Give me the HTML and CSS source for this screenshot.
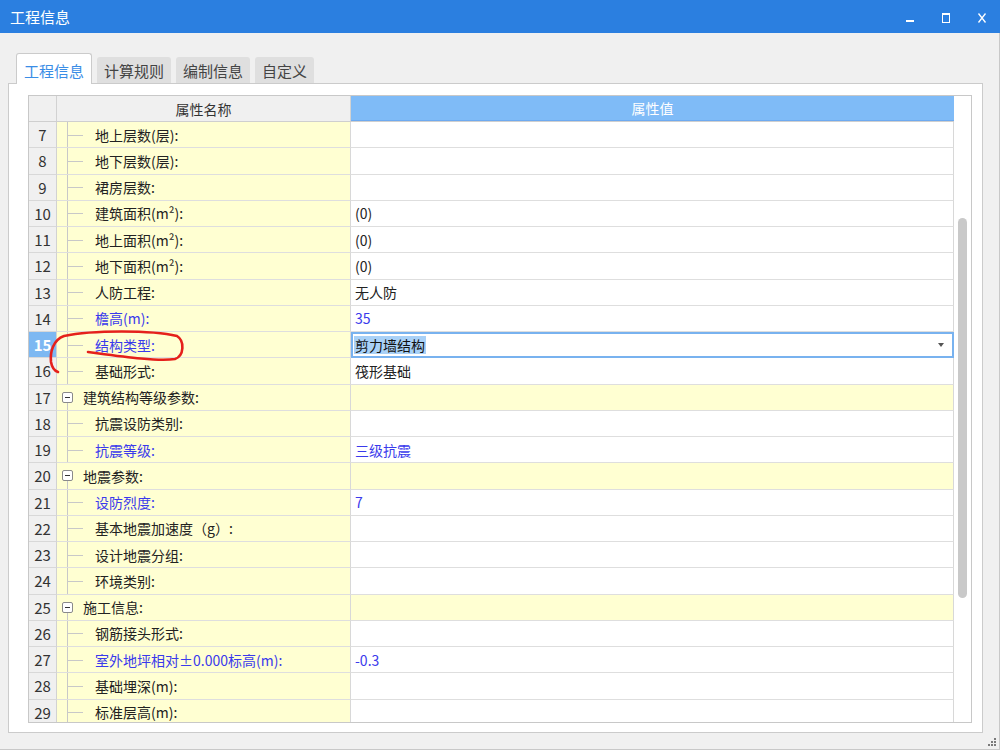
FILE: index.html
```html
<!DOCTYPE html>
<html lang="zh-CN">
<head>
<meta charset="utf-8">
<title>工程信息</title>
<link rel="stylesheet" href="styles.css">
</head>
<body>
<div class="titlebar">
  <div class="title">工程信息</div>
  <div class="controls">
    <div class="ctl"><svg width="10" height="10" viewBox="0 0 10 10"><rect x="1" y="7" width="8" height="2" fill="#fff"/></svg></div>
    <div class="ctl"><svg width="10" height="10" viewBox="0 0 10 10"><rect x="1.5" y="0.5" width="7" height="9" fill="none" stroke="#fff" stroke-width="1"/><rect x="1" y="0" width="8" height="2" fill="#fff"/></svg></div>
    <div class="ctl"><svg width="10" height="10" viewBox="0 0 10 10"><path d="M1.5 0.5 L8.5 9.5 M8.5 0.5 L1.5 9.5" stroke="#fff" stroke-width="1.3" fill="none"/></svg></div>
  </div>
</div>
<div class="window">
  <div class="tabs">
    <div class="tab active">工程信息</div>
    <div class="tab">计算规则</div>
    <div class="tab">编制信息</div>
    <div class="tab">自定义</div>
  </div>
  <div class="panel">
    <div class="grid">
      <div class="gmain">
        <div class="hrow">
          <div class="hnum"></div>
          <div class="hname">属性名称</div>
          <div class="hval">属性值</div>
        </div>
        <div class="row"><div class="num">7</div><div class="name">地上层数(层):</div><div class="val"></div></div>
        <div class="row"><div class="num">8</div><div class="name">地下层数(层):</div><div class="val"></div></div>
        <div class="row"><div class="num">9</div><div class="name">裙房层数:</div><div class="val"></div></div>
        <div class="row"><div class="num">10</div><div class="name">建筑面积(m²):</div><div class="val">(0)</div></div>
        <div class="row"><div class="num">11</div><div class="name">地上面积(m²):</div><div class="val">(0)</div></div>
        <div class="row"><div class="num">12</div><div class="name">地下面积(m²):</div><div class="val">(0)</div></div>
        <div class="row"><div class="num">13</div><div class="name">人防工程:</div><div class="val">无人防</div></div>
        <div class="row blue"><div class="num">14</div><div class="name">檐高(m):</div><div class="val">35</div></div>
        <div class="row blue"><div class="num sel">15</div><div class="name">结构类型:</div><div class="val combo"><div class="combo-box"><span class="seltext">剪力墙结构</span><span class="arrow"></span></div></div></div>
        <div class="row"><div class="num">16</div><div class="name">基础形式:</div><div class="val">筏形基础</div></div>
        <div class="row"><div class="num">17</div><div class="name group"><span class="minus"></span>建筑结构等级参数:</div><div class="val grp"></div></div>
        <div class="row"><div class="num">18</div><div class="name">抗震设防类别:</div><div class="val"></div></div>
        <div class="row blue"><div class="num">19</div><div class="name">抗震等级:</div><div class="val">三级抗震</div></div>
        <div class="row"><div class="num">20</div><div class="name group"><span class="minus"></span>地震参数:</div><div class="val grp"></div></div>
        <div class="row blue"><div class="num">21</div><div class="name">设防烈度:</div><div class="val">7</div></div>
        <div class="row"><div class="num">22</div><div class="name">基本地震加速度（g）:</div><div class="val"></div></div>
        <div class="row"><div class="num">23</div><div class="name">设计地震分组:</div><div class="val"></div></div>
        <div class="row"><div class="num">24</div><div class="name">环境类别:</div><div class="val"></div></div>
        <div class="row"><div class="num">25</div><div class="name group"><span class="minus"></span>施工信息:</div><div class="val grp"></div></div>
        <div class="row"><div class="num">26</div><div class="name">钢筋接头形式:</div><div class="val"></div></div>
        <div class="row blue"><div class="num">27</div><div class="name">室外地坪相对±0.000标高(m):</div><div class="val">-0.3</div></div>
        <div class="row"><div class="num">28</div><div class="name">基础埋深(m):</div><div class="val"></div></div>
        <div class="row"><div class="num">29</div><div class="name">标准层高(m):</div><div class="val"></div></div>
      </div>
      <div class="vscroll"><div class="thumb"></div></div>
    </div>
  </div>
  <div class="footer">
    <svg width="9" height="9" viewBox="0 0 9 9"><g fill="#7a7a7a"><rect x="7" y="1" width="2" height="2"/><rect x="4" y="4" width="2" height="2"/><rect x="7" y="4" width="2" height="2"/><rect x="1" y="7" width="2" height="2"/><rect x="4" y="7" width="2" height="2"/><rect x="7" y="7" width="2" height="2"/></g></svg>
  </div>
</div>
<svg class="ink" width="1000" height="750" viewBox="0 0 1000 750">
  <path d="M88 352 C 118 356, 158 362, 175 359 C 184 356, 185 341, 177 336 C 152 330, 92 330, 64 336 C 53 340, 50 352, 51 362 C 52 368, 55 371, 58 372" fill="none" stroke="#e5201b" stroke-width="2.6" stroke-linecap="round"/>
</svg>
</body>
</html>
```

FILE: styles.css
```css
* { box-sizing: border-box; }

body {
  margin: 0;
  width: 1000px;
  height: 750px;
  overflow: hidden;
  background: #f0f0f0;
  font-family: "Noto Sans CJK SC", "Noto Sans", sans-serif;
  font-size: 14px;
  color: #222;
  display: flex;
  flex-direction: column;
  position: relative;
}

.titlebar {
  height: 33px;
  flex: none;
  background: #2b7fe0;
  color: #fff;
  display: flex;
  align-items: center;
  padding-left: 10px;
  font-size: 15px;
}
.title { flex: 1; }
.controls { display: flex; height: 100%; }
.ctl {
  width: 36px;
  height: 100%;
  display: flex;
  align-items: center;
  justify-content: center;
  padding-top: 2px;
}

.window {
  flex: 1;
  display: flex;
  flex-direction: column;
  padding: 20px 16px 0 8px;
  border-right: 1px solid #c8c8c8;
  border-bottom: 1px solid #c8c8c8;
}

.tabs {
  height: 30px;
  display: flex;
  align-items: flex-end;
  gap: 5px;
  padding-left: 8px;
  position: relative;
  z-index: 1;
}
.tab {
  height: 26px;
  padding: 0 7px;
  background: #dfdfdf;
  color: #444;
  font-size: 15px;
  display: flex;
  align-items: center;
  border-radius: 3px 3px 0 0;
}
.tab.active {
  height: 31px;
  margin-bottom: -1px;
  padding: 2px 7px 0;
  background: #fff;
  color: #3a8de6;
  border: 1px solid #cbcbcb;
  border-bottom: none;
}

.panel {
  height: 650px;
  flex: none;
  background: #fff;
  border: 1px solid #cbcbcb;
  padding: 11px 10px 10px 19px;
}

.grid {
  width: 944px;
  height: 628px;
  border: 1px solid #c8c8c8;
  display: flex;
}

.gmain {
  width: 925px;
  display: flex;
  flex-direction: column;
  overflow: hidden;
}

.hrow {
  height: 26px;
  flex: none;
  display: flex;
  border-bottom: 1px solid #cfcfcf;
}
.hnum {
  width: 28px;
  background: #f0f0f0;
  border-right: 1px solid #d2d2d2;
}
.hname {
  width: 294px;
  background: #f0f0f0;
  border-right: 1px solid #d2d2d2;
  display: flex;
  align-items: center;
  justify-content: center;
  color: #333;
}
.hval {
  width: 603px;
  background: #7fbbf7;
  color: #fff;
  display: flex;
  align-items: center;
  justify-content: center;
  border-bottom: 1px solid #6eaaf0;
}

.row {
  height: 26.25px;
  flex: none;
  display: flex;
}
.num {
  width: 28px;
  background: #f0f0f0;
  border-right: 1px solid #d2d2d2;
  border-bottom: 1px solid #d8d8d8;
  display: flex;
  align-items: center;
  justify-content: center;
  color: #333;
  font-size: 15px;
}
.num.sel {
  background: #7db8f2;
  color: #fff;
  font-weight: bold;
}
.name {
  width: 294px;
  background: #ffffd2;
  border-right: 1px solid #d8d8d8;
  border-bottom: 1px solid #dedede;
  display: flex;
  align-items: center;
  padding-left: 38px;
  position: relative;
  white-space: nowrap;
}
.name::before {
  content: "";
  position: absolute;
  left: 10px;
  top: 0;
  bottom: 0;
  border-left: 1px solid #c8c8c8;
}
.name::after {
  content: "";
  position: absolute;
  left: 11px;
  width: 15px;
  top: 50%;
  border-top: 1px solid #c8c8c8;
}
.name.group {
  padding-left: 5px;
  gap: 10px;
}
.name.group::before { top: 18px; }
.name.group::after { display: none; }
.minus {
  width: 11px;
  height: 11px;
  border: 1px solid #8a8a8a;
  border-radius: 2px;
  background: #fff;
  display: flex;
  align-items: center;
  justify-content: center;
  position: relative;
  z-index: 1;
}
.minus::before {
  content: "";
  width: 5px;
  border-top: 1px solid #333;
}
.val {
  width: 603px;
  background: #fff;
  border-right: 1px solid #d8d8d8;
  border-bottom: 1px solid #dedede;
  display: flex;
  align-items: center;
  padding-left: 4px;
  white-space: nowrap;
}
.val.grp { background: #ffffd2; }
.row.blue .name, .row.blue .val { color: #3a3aec; }

.val.combo {
  padding: 0;
  border-bottom: none;
  border-right: none;
}
.combo-box {
  flex: 1;
  height: 100%;
  border: 2px solid #78b2ef;
  display: flex;
  align-items: center;
  padding-left: 1px;
}
.seltext {
  background: #a9d1f7;
  color: #111;
  padding: 0 1px;
  line-height: 18px;
}
.arrow {
  margin-left: auto;
  margin-right: 8px;
  width: 0;
  height: 0;
  border-left: 3.5px solid transparent;
  border-right: 3.5px solid transparent;
  border-top: 4px solid #555;
}

.vscroll {
  width: 17px;
  background: #fff;
  display: flex;
  justify-content: center;
}
.thumb {
  width: 9px;
  height: 380px;
  margin-top: 122px;
  background: #c9c9c9;
  border-radius: 5px;
}

.footer {
  flex: 1;
  display: flex;
  justify-content: flex-end;
  align-items: flex-end;
  padding: 0 1px 3px 0;
  margin-right: -14px;
}

.ink {
  position: absolute;
  left: 0;
  top: 0;
  pointer-events: none;
}
```
